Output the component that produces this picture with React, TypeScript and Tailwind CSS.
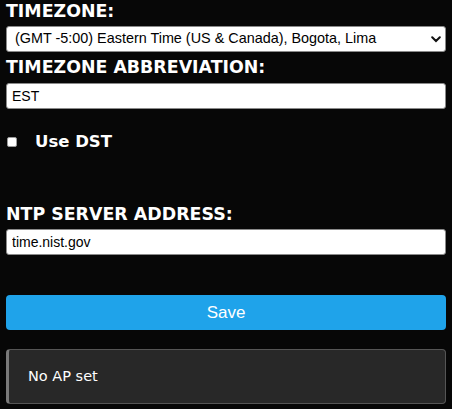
import { useState } from "react";

const heading = "block leading-[22px] font-bold text-white font-['DejaVu_Sans',Verdana,sans-serif]";
const label = `${heading} text-[17.4px]`;
const field =
  "block h-[26px] w-full rounded-[3px] border border-[#8a8a8a] bg-white px-[5px] text-[14px] text-black font-['Liberation_Sans',Arial,sans-serif] outline-none";

const Chevron = () => (
  <svg width="10" height="7" viewBox="0 0 10 7" className="pointer-events-none absolute right-[5px] top-[10px]">
    <path d="M1.2 1.2 5 5 8.8 1.2" fill="none" stroke="#111" strokeWidth="2" strokeLinecap="round" />
  </svg>
);

export default function App() {
  const [dst, setDst] = useState(false);

  return (
    <div className="min-h-[409px] w-full bg-[#070707] px-[6px] pb-[6px]">
      <label className={label}>TIMEZONE:</label>
      <div className="relative mt-[4px]">
        <select
          className="block h-[26px] w-full appearance-none rounded-[3px] border border-[#8a8a8a] bg-white pl-[8px] pr-[5px] text-[14.4px] text-black font-['Liberation_Sans',Arial,sans-serif] outline-none"
          defaultValue="-5"
        >
          <option value="-5">(GMT -5:00) Eastern Time (US &amp; Canada), Bogota, Lima</option>
        </select>
        <Chevron />
      </div>

      <label className={`${label} mt-[4px]`}>TIMEZONE ABBREVIATION:</label>
      <input className={`${field} mt-[5px]`} defaultValue="EST" />

      <div className="mt-[22px] flex h-[22px] items-center">
        <button
          type="button"
          onClick={() => setDst(!dst)}
          className="ml-[1px] h-[10px] w-[10px] rounded-[2px] border border-[#9a9a9a] bg-white"
        />
        <span className={`${heading} ml-[18px] text-[16.5px]`}>Use DST</span>
      </div>

      <label className={`${label} mt-[50px]`}>NTP SERVER ADDRESS:</label>
      <input className={`${field} mt-[4px]`} defaultValue="time.nist.gov" />

      <button
        type="button"
        className="mt-[40px] block h-[35px] w-full rounded-[4px] bg-[#1fa3ea] text-[17px] text-white font-['Liberation_Sans',Arial,sans-serif]"
      >
        Save
      </button>

      <div className="mt-[19px] flex h-[55px] items-center rounded-[4px] border border-l-[3px] border-[#555] border-l-[#7a7a7a] bg-[#282828] pl-[19px]">
        <span className="text-[14.5px] text-white font-['DejaVu_Sans',Verdana,sans-serif]">No AP set</span>
      </div>
    </div>
  );
}
